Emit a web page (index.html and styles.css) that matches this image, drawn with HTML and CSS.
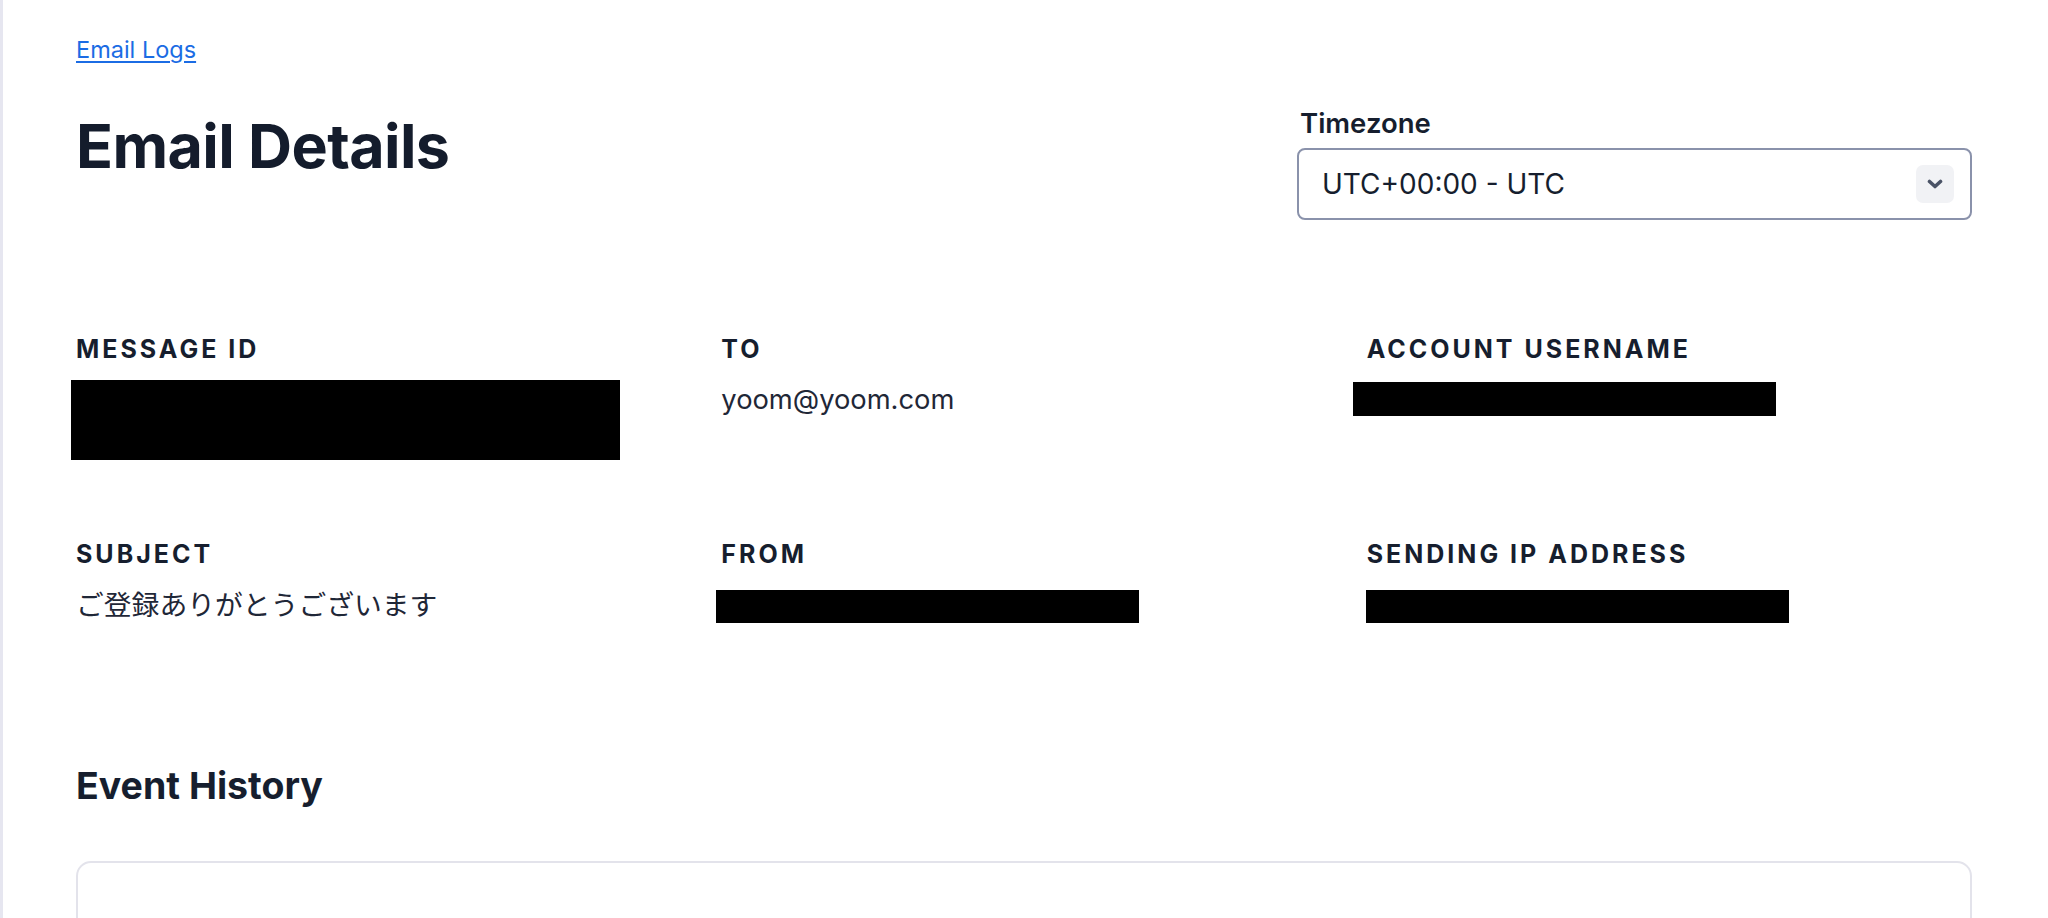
FILE: index.html
```html
<!DOCTYPE html>
<html lang="en">
<head>
<meta charset="utf-8">
<title>Email Details</title>
<link rel="stylesheet" href="styles.css">
</head>
<body>
<main class="page">
  <a class="back-link" href="#">Email Logs</a>

  <div class="header">
    <h1 class="title">Email Details</h1>
    <div class="tz">
      <div class="tz-label">Timezone</div>
      <div class="select">
        <span class="select-value">UTC+00:00 - UTC</span>
        <span class="chev-btn">
          <svg width="16" height="10" viewBox="0 0 16 10" aria-hidden="true">
            <path d="M2.5 2.5 L8 7.5 L13.5 2.5" fill="none" stroke="#4a5366" stroke-width="3.6" stroke-linecap="round" stroke-linejoin="round"/>
          </svg>
        </span>
      </div>
    </div>
  </div>

  <section class="meta-grid">
    <div class="field">
      <div class="field-label">Message ID</div>
      <div class="redact redact-id"></div>
    </div>
    <div class="field">
      <div class="field-label">To</div>
      <div class="field-value">yoom@yoom.com</div>
    </div>
    <div class="field">
      <div class="field-label">Account Username</div>
      <div class="redact redact-account"></div>
    </div>
    <div class="field">
      <div class="field-label">Subject</div>
      <div class="field-value field-value-ja" lang="ja">ご登録ありがとうございます</div>
    </div>
    <div class="field">
      <div class="field-label">From</div>
      <div class="redact redact-from"></div>
    </div>
    <div class="field">
      <div class="field-label">Sending IP Address</div>
      <div class="redact redact-ip"></div>
    </div>
  </section>

  <h2 class="section-title">Event History</h2>
  <div class="card"></div>
</main>
</body>
</html>
```

FILE: styles.css
```css
html, body {
  margin: 0;
  padding: 0;
  background: #ffffff;
}

body {
  font-family: Inter, "Noto Sans", "Noto Sans CJK JP", sans-serif;
  color: #161e2e;
  border-left: 3px solid #e6e6f0;
  min-height: 100vh;
  box-sizing: border-box;
}

.page {
  padding: 32px 76px 0 73px;
  display: flex;
  flex-direction: column;
  align-items: stretch;
}

.back-link {
  align-self: flex-start;
  font-size: 23.5px;
  line-height: 36px;
  color: #1b6ce4;
  text-decoration: underline;
  text-underline-offset: 3px;
  text-decoration-thickness: 2px;
}

.header {
  display: flex;
  justify-content: space-between;
  align-items: flex-start;
  margin-top: 36px;
}

.title {
  margin: 6px 0 0 0;
  font-size: 61px;
  line-height: 72px;
  font-weight: 700;
  letter-spacing: -0.01em;
  color: #141c2c;
}

.tz {
  width: 675px;
  display: flex;
  flex-direction: column;
}

.tz-label {
  font-size: 27.5px;
  line-height: 38px;
  font-weight: 600;
  color: #161e2e;
  padding-left: 3px;
  margin-bottom: 6px;
}

.select {
  height: 72px;
  box-sizing: border-box;
  border: 2px solid #8a92ab;
  border-radius: 8px;
  display: flex;
  align-items: center;
  justify-content: space-between;
  padding: 0 16px 0 23px;
}

.select-value {
  font-size: 28px;
  color: #161e2e;
}

.chev-btn {
  width: 38px;
  height: 38px;
  border-radius: 7px;
  background: #f1f2f5;
  display: flex;
  align-items: center;
  justify-content: center;
}

.meta-grid {
  display: grid;
  grid-template-columns: repeat(3, 1fr);
  column-gap: 40px;
  row-gap: 76px;
  margin-top: 111px;
}

.field {
  display: flex;
  flex-direction: column;
  align-items: flex-start;
}

.field-label {
  font-size: 25px;
  line-height: 36px;
  font-weight: 700;
  text-transform: uppercase;
  letter-spacing: 0.12em;
  color: #161e2e;
  margin-bottom: 13px;
}

.field-value {
  font-size: 27.3px;
  line-height: 40px;
  color: #1f2737;
}

.field-value-ja {
  font-size: 27.8px;
}

.redact {
  background: #000000;
}

.redact-id {
  width: 549px;
  height: 80px;
  margin-left: -5px;
}

.redact-account {
  width: 423px;
  height: 34px;
  margin-left: -14px;
  margin-top: 2px;
}

.redact-from {
  width: 423px;
  height: 33px;
  margin-left: -5px;
  margin-top: 5px;
}

.redact-ip {
  width: 423px;
  height: 33px;
  margin-left: -1px;
  margin-top: 5px;
}

.section-title {
  margin: 133px 0 0 0;
  font-size: 37.5px;
  line-height: 55px;
  font-weight: 700;
  color: #161e2e;
}

.card {
  margin-top: 48px;
  height: 240px;
  border: 2px solid #e3e3eb;
  border-radius: 15px;
}
```
